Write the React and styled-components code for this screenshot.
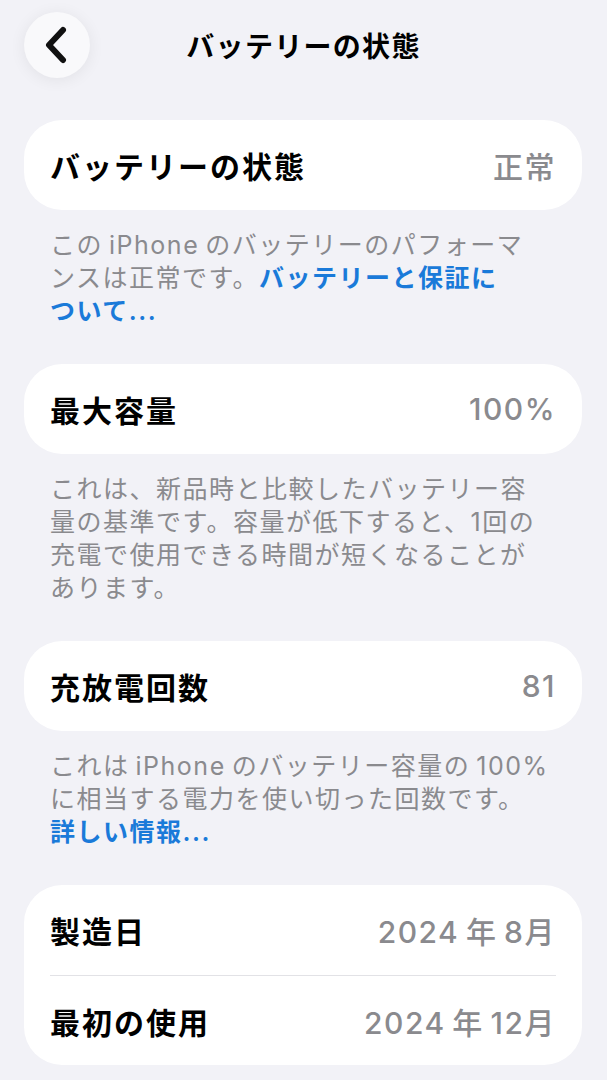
import React from 'react';
import styled, { createGlobalStyle } from 'styled-components';

const GlobalStyle = createGlobalStyle`
  html, body {
    margin: 0;
    padding: 0;
    background: #f2f2f7;
  }

  body {
    font-family: Inter, "Noto Sans CJK JP", sans-serif;
    -webkit-font-smoothing: antialiased;
  }
`;

const Page = styled.div`
  width: 607px;
  min-height: 1080px;
  background: #f2f2f7;
  box-sizing: border-box;
  padding: 12px 0 40px;
`;

const Header = styled.header`
  display: grid;
  grid-template-columns: 66px 1fr 66px;
  align-items: center;
  padding: 0 24px;
  height: 66px;
`;

const BackButton = styled.button`
  width: 66px;
  height: 66px;
  border: 0;
  padding: 0 3px 0 0;
  border-radius: 50%;
  background: #f9f9fb;
  box-shadow: 0 2px 16px rgba(0, 0, 0, 0.07);
  display: flex;
  align-items: center;
  justify-content: center;
  cursor: pointer;
`;

const Title = styled.h1`
  margin: 0;
  text-align: center;
  font-size: 28px;
  font-weight: 700;
  color: #000;
  letter-spacing: 1.3px;
`;

const Content = styled.main`
  display: flex;
  flex-direction: column;
  padding: 42px 25px 0 24px;
`;

const Section = styled.section`
  display: flex;
  flex-direction: column;
  margin-bottom: ${p => (p.$last ? 0 : '36px')};
`;

const Card = styled.div`
  background: #fff;
  border-radius: 38px;
  padding: 0 26px;
`;

const Row = styled.div`
  display: flex;
  align-items: center;
  justify-content: space-between;
  height: 90px;
  box-sizing: border-box;
  border-top: ${p => (p.$divider ? '1px solid #e2e2e6' : '0')};
`;

const Label = styled.span`
  font-size: 30px;
  font-weight: 700;
  color: #000;
  letter-spacing: 2px;
`;

const Value = styled.span`
  font-size: 30px;
  font-weight: 500;
  color: #8a8a8e;
  letter-spacing: 1.5px;
`;

const Footer = styled.p`
  margin: 0;
  padding: 19px 26px 0;
  font-size: 25px;
  line-height: 33px;
  color: #8a8a8e;
  letter-spacing: 1.5px;
`;

const Link = styled.a`
  color: #1a7ad9;
  font-weight: 600;
  text-decoration: none;
`;

function Chevron() {
  return (
    <svg width="24" height="38" viewBox="0 0 24 38" fill="none">
      <path d="M19 4 L5 19 L19 34" stroke="#111" strokeWidth="6" strokeLinecap="round" strokeLinejoin="round" />
    </svg>
  );
}

export default function App() {
  return (
    <>
      <GlobalStyle />
      <Page>
        <Header>
          <BackButton aria-label="戻る">
            <Chevron />
          </BackButton>
          <Title>バッテリーの状態</Title>
          <span />
        </Header>

        <Content>
          <Section>
            <Card>
              <Row>
                <Label>バッテリーの状態</Label>
                <Value>正常</Value>
              </Row>
            </Card>
            <Footer>
              この{'\u2009'}iPhone{'\u2009'}のバッテリーのパフォーマ<br />
              ンスは正常です。<Link href="#">バッテリーと保証に<br />ついて...</Link>
            </Footer>
          </Section>

          <Section>
            <Card>
              <Row>
                <Label>最大容量</Label>
                <Value>100%</Value>
              </Row>
            </Card>
            <Footer>
              これは、新品時と比較したバッテリー容<br />
              量の基準です。容量が低下すると、1回の<br />
              充電で使用できる時間が短くなることが<br />
              あります。
            </Footer>
          </Section>

          <Section>
            <Card>
              <Row>
                <Label>充放電回数</Label>
                <Value>81</Value>
              </Row>
            </Card>
            <Footer>
              これは{'\u2009'}iPhone{'\u2009'}のバッテリー容量の{'\u2009'}100%<br />
              に相当する電力を使い切った回数です。<br />
              <Link href="#">詳しい情報...</Link>
            </Footer>
          </Section>

          <Section $last>
            <Card>
              <Row>
                <Label>製造日</Label>
                <Value>2024{'\u2009'}年{'\u2009'}8月</Value>
              </Row>
              <Row $divider>
                <Label>最初の使用</Label>
                <Value>2024{'\u2009'}年{'\u2009'}12月</Value>
              </Row>
            </Card>
          </Section>
        </Content>
      </Page>
    </>
  );
}
